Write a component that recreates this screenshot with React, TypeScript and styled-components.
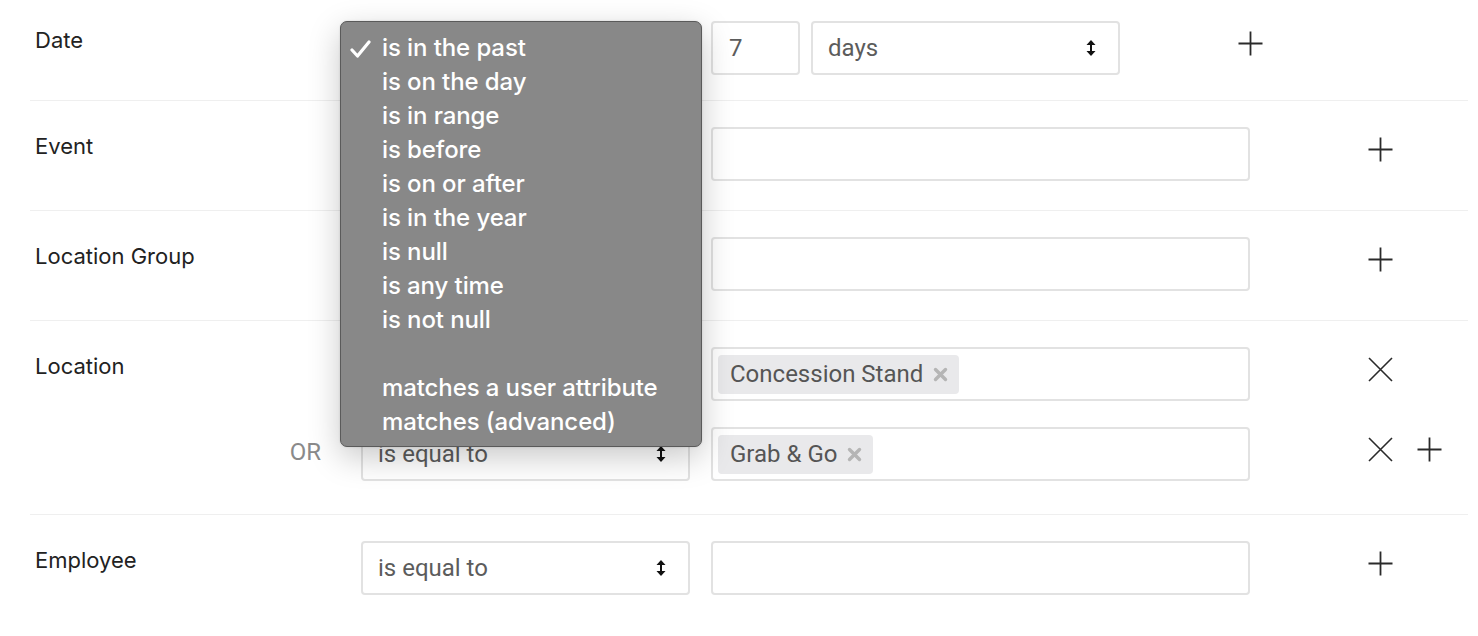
import React from "react";
import styled, { createGlobalStyle } from "styled-components";

const Global = createGlobalStyle`
  html, body { margin: 0; padding: 0; background: #fff; }
  body { font-family: "Inter", "Liberation Sans", sans-serif; }
  * { box-sizing: border-box; }
`;

const Page = styled.div`
  padding: 0 10px 0 30px;
  position: relative;
`;

const Row = styled.div<{ $pt?: number; $pb?: number; $last?: boolean }>`
  display: flex;
  flex-direction: column;
  gap: 26px;
  padding: ${(p) => p.$pt ?? 26}px 0 ${(p) => p.$pb ?? 29}px 0;
  border-bottom: ${(p) => (p.$last ? "none" : "1px solid #efefef")};
`;

const Line = styled.div`
  display: flex;
  align-items: flex-start;
  position: relative;
`;

const Label = styled.div<{ $or?: boolean }>`
  width: 331px;
  padding-left: 5px;
  padding-right: ${(p) => (p.$or ? 40 : 0)}px;
  text-align: ${(p) => (p.$or ? "right" : "left")};
  font-family: ${(p) => (p.$or ? '"Roboto", sans-serif' : '"Inter", sans-serif')};
  font-size: ${(p) => (p.$or ? 24 : 22)}px;
  line-height: 28px;
  color: ${(p) => (p.$or ? "#8a8a8a" : "#222")};
  padding-top: ${(p) => (p.$or ? 11 : 5)}px;
  flex: none;
`;

const SelectBox = styled.div<{ $w: number }>`
  position: relative;
  width: ${(p) => p.$w}px;
  height: 54px;
  border: 2px solid #e2e2e2;
  border-radius: 4px;
  display: flex;
  align-items: center;
  justify-content: space-between;
  padding: 0 22px 0 15px;
  font-family: "Roboto", sans-serif;
  font-size: 24px;
  color: #5c5c5c;
  flex: none;
  background: #fff;
`;

const InputBox = styled.div<{ $w: number }>`
  width: ${(p) => p.$w}px;
  height: 54px;
  border: 2px solid #e2e2e2;
  border-radius: 4px;
  display: flex;
  align-items: center;
  padding: 0 5px;
  font-family: "Roboto", sans-serif;
  font-size: 24px;
  color: #5c5c5c;
  flex: none;
  background: #fff;
`;

const NumberText = styled.span`
  padding-left: 11px;
`;

const Value = styled.div`
  display: flex;
  gap: 11px;
  margin-left: 21px;
  flex: none;
`;

const Actions = styled.div`
  display: flex;
  gap: 24px;
  margin-left: 118px;
  padding-top: 10px;
`;

const IconBtn = styled.span`
  width: 25px;
  height: 25px;
  display: inline-flex;
  color: #2a2a2a;
`;

const Chip = styled.span`
  display: inline-flex;
  align-items: center;
  height: 39px;
  padding: 0 11px 0 12px;
  gap: 10px;
  border-radius: 4px;
  background: #e9e9eb;
  color: #555;
  font-family: "Roboto", sans-serif;
  font-size: 24px;
`;

const ChipX = styled.span`
  display: inline-flex;
`;

const Menu = styled.div`
  position: absolute;
  left: -21px;
  top: 0;
  width: 362px;
  height: 426px;
  background: #888888;
  border: 1px solid #5a5a5a;
  border-radius: 7px;
  box-shadow: 0 10px 32px rgba(0, 0, 0, 0.22), 0 0 2px rgba(0, 0, 0, 0.15);
  padding: 9px 0 0 0;
  z-index: 10;
`;

const MenuItem = styled.div<{ $gapBefore?: boolean }>`
  position: relative;
  height: 34px;
  line-height: 34px;
  padding-left: 41px;
  margin-top: ${(p) => (p.$gapBefore ? 34 : 0)}px;
  color: #fff;
  font-family: "Inter", sans-serif;
  font-weight: 500;
  font-size: 24px;
  letter-spacing: -0.1px;
`;

const Check = styled.span`
  position: absolute;
  left: 9px;
  top: 9px;
  display: inline-flex;
`;

const Arrows = () => (
  <svg width="10" height="16" viewBox="0 0 10 16">
    <path d="M5 0 L9.5 5 L0.5 5 Z" fill="#111" />
    <rect x="4" y="4" width="2" height="8" fill="#111" />
    <path d="M5 16 L9.5 11 L0.5 11 Z" fill="#111" />
  </svg>
);

const CheckIcon = () => (
  <svg width="21" height="18" viewBox="0 0 21 18">
    <path
      d="M2 10 L7.5 16 L19 2"
      stroke="#fff"
      strokeWidth="3.2"
      fill="none"
      strokeLinecap="round"
      strokeLinejoin="round"
    />
  </svg>
);

const SmallX = () => (
  <ChipX>
    <svg width="15" height="15" viewBox="0 0 15 15">
      <path d="M2.5 2.5 L12.5 12.5 M12.5 2.5 L2.5 12.5" stroke="#b5b5b5" strokeWidth="3.4" strokeLinecap="round" />
    </svg>
  </ChipX>
);

const Plus = () => (
  <IconBtn>
    <svg width="25" height="25" viewBox="0 0 25 25">
      <path d="M12.5 0.5 V24.5 M0.5 12.5 H24.5" stroke="#2a2a2a" strokeWidth="1.8" />
    </svg>
  </IconBtn>
);

const Cross = () => (
  <IconBtn>
    <svg width="25" height="25" viewBox="0 0 25 25">
      <path d="M1 1 L24 24 M24 1 L1 24" stroke="#2a2a2a" strokeWidth="1.6" />
    </svg>
  </IconBtn>
);

const Select = ({ w, text }: { w: number; text: string }) => (
  <SelectBox $w={w}>
    <span>{text}</span>
    <Arrows />
  </SelectBox>
);

const items = [
  "is in the past",
  "is on the day",
  "is in range",
  "is before",
  "is on or after",
  "is in the year",
  "is null",
  "is any time",
  "is not null",
];

export default function App() {
  return (
    <>
      <Global />
      <Page>
        <Row $pt={21} $pb={25}>
          <Line>
            <Label>Date</Label>
            <div style={{ position: "relative" }}>
              <Select w={329} text="is in the past" />
              <Menu>
                {items.map((t, i) => (
                  <MenuItem key={t}>
                    {i === 0 && (
                      <Check>
                        <CheckIcon />
                      </Check>
                    )}
                    {t}
                  </MenuItem>
                ))}
                <MenuItem $gapBefore>matches a user attribute</MenuItem>
                <MenuItem>matches (advanced)</MenuItem>
              </Menu>
            </div>
            <Value>
              <InputBox $w={89}>
                <NumberText>7</NumberText>
              </InputBox>
              <Select w={309} text="days" />
            </Value>
            <Actions>
              <Plus />
            </Actions>
          </Line>
        </Row>
        <Row>
          <Line>
            <Label>Event</Label>
            <Select w={329} text="is equal to" />
            <Value>
              <InputBox $w={539} />
            </Value>
            <Actions>
              <Plus />
            </Actions>
          </Line>
        </Row>
        <Row>
          <Line>
            <Label>Location Group</Label>
            <Select w={329} text="is equal to" />
            <Value>
              <InputBox $w={539} />
            </Value>
            <Actions>
              <Plus />
            </Actions>
          </Line>
        </Row>
        <Row $pb={33}>
          <Line>
            <Label>Location</Label>
            <Select w={329} text="is equal to" />
            <Value>
              <InputBox $w={539}>
                <Chip>
                  Concession Stand
                  <SmallX />
                </Chip>
              </InputBox>
            </Value>
            <Actions>
              <Cross />
            </Actions>
          </Line>
          <Line>
            <Label $or>OR</Label>
            <Select w={329} text="is equal to" />
            <Value>
              <InputBox $w={539}>
                <Chip>
                  Grab &amp; Go
                  <SmallX />
                </Chip>
              </InputBox>
            </Value>
            <Actions>
              <Cross />
              <Plus />
            </Actions>
          </Line>
        </Row>
        <Row $last>
          <Line>
            <Label>Employee</Label>
            <Select w={329} text="is equal to" />
            <Value>
              <InputBox $w={539} />
            </Value>
            <Actions>
              <Plus />
            </Actions>
          </Line>
        </Row>
      </Page>
    </>
  );
}
